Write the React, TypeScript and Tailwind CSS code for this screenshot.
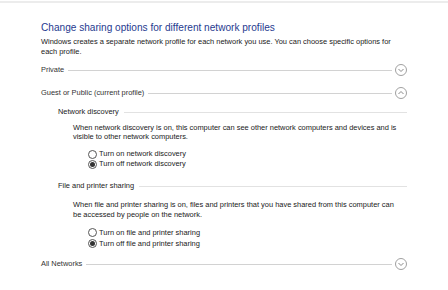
import React from "react";

function Chevron({ up }: { up?: boolean }) {
  return (
    <svg width="12" height="12" viewBox="0 0 12 12" className="shrink-0">
      <circle cx="6" cy="6" r="5.5" fill="none" stroke="#a0a0a0" strokeWidth="1" />
      {up ? (
        <path d="M3.5 7L6 4.5L8.5 7" fill="none" stroke="#8a8a8a" strokeWidth="1" />
      ) : (
        <path d="M3.5 5L6 7.5L8.5 5" fill="none" stroke="#8a8a8a" strokeWidth="1" />
      )}
    </svg>
  );
}

function Radio({ checked, label }: { checked?: boolean; label: string }) {
  return (
    <div className="flex items-center gap-[2px] h-full">
      <span className="w-[9px] h-[9px] rounded-full border border-[#555] bg-white flex items-center justify-center">
        {checked && <span className="w-[5px] h-[5px] rounded-full bg-[#333]" />}
      </span>
      <span>{label}</span>
    </div>
  );
}

function ProfileRow({ label, up, className }: { label: string; up?: boolean; className: string }) {
  return (
    <div className={`flex items-center h-[12px] pr-[41px] ${className}`}>
      <span className="text-[#333]">{label}</span>
      <div className="flex-1 h-px bg-[#d2d2d2] ml-[4px] mr-[3px]" />
      <Chevron up={up} />
    </div>
  );
}

function SubHeading({ label, className }: { label: string; className: string }) {
  return (
    <div className={`flex items-center h-[12px] pl-[17px] pr-[41px] ${className}`}>
      <span className="text-[#222]">{label}</span>
      <div className="flex-1 h-px bg-[#e2e2e2] ml-[5px]" />
    </div>
  );
}

export default function App() {
  return (
    <div
      className="w-[448px] h-[290px] bg-white overflow-hidden text-[7.45px] text-[#1a1a1a]"
      style={{ fontFamily: '"Liberation Sans", Arial, sans-serif' }}
    >
      <div className="h-[2px] mt-px bg-[#ececec]" />
      <div className="pl-[41px]">
        <div className="mt-[18px] h-[14px] leading-[14px] text-[10.1px] text-[#1f3a8f]">
          Change sharing options for different network profiles
        </div>
        <div className="mt-[2px] leading-[10px] pr-[41px]">
          Windows creates a separate network profile for each network you use. You can choose specific options for
          <br />
          each profile.
        </div>
        <ProfileRow label="Private" className="mt-[7px]" />
        <ProfileRow label="Guest or Public (current profile)" up className="mt-[11px]" />

        <SubHeading label="Network discovery" className="mt-[7px]" />
        <div className="pl-[32px] mt-[5px] leading-[9px]">
          When network discovery is on, this computer can see other network computers and devices and is
          <br />
          visible to other network computers.
        </div>
        <div className="pl-[47px] mt-[8px]">
          <div className="h-[10px]">
            <Radio label="Turn on network discovery" />
          </div>
          <div className="h-[10px]">
            <Radio checked label="Turn off network discovery" />
          </div>
        </div>

        <SubHeading label="File and printer sharing" className="mt-[11px]" />
        <div className="pl-[32px] mt-[8px] leading-[9.5px]">
          When file and printer sharing is on, files and printers that you have shared from this computer can
          <br />
          be accessed by people on the network.
        </div>
        <div className="pl-[47px] mt-[8px]">
          <div className="h-[11px]">
            <Radio label="Turn on file and printer sharing" />
          </div>
          <div className="h-[11px]">
            <Radio checked label="Turn off file and printer sharing" />
          </div>
        </div>

        <ProfileRow label="All Networks" className="mt-[9px]" />
      </div>
    </div>
  );
}
